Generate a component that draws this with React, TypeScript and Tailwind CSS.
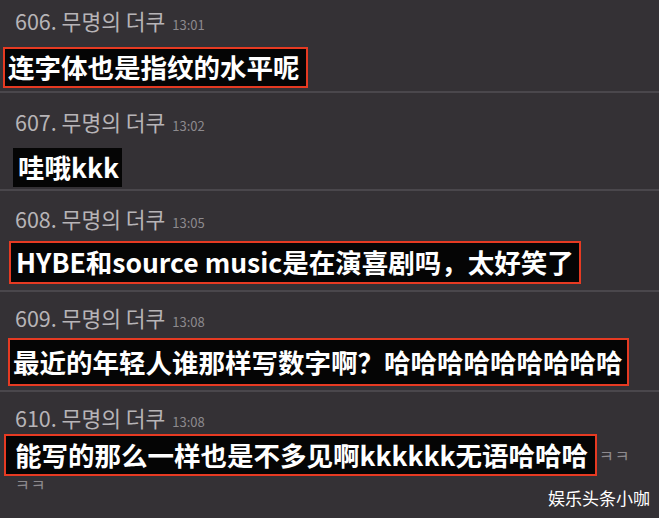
const rows = [
  {
    no: "606.",
    time: "13:01",
    text: "连字体也是指纹的水平呢",
    rowCls: "pt-[7px] pb-[3px]",
    boxCls: "mt-[12px] ml-[3px] h-[41px] border-2 border-[#e63a22] pl-[3px] pr-[6px]",
  },
  {
    no: "607.",
    time: "13:02",
    text: "哇哦kkk",
    rowCls: "pt-[15px] pb-[2px]",
    boxCls: "mt-[12px] ml-[13px] h-[39px] pl-[5px] pr-[3px]",
  },
  {
    no: "608.",
    time: "13:05",
    text: "HYBE和source music是在演喜剧吗，太好笑了",
    rowCls: "pt-[14px] pb-[6px]",
    boxCls: "mt-[8px] ml-[9px] h-[43px] border-2 border-[#e63a22] pl-[5px] pr-[5px]",
  },
  {
    no: "609.",
    time: "13:08",
    text: "最近的年轻人谁那样写数字啊？哈哈哈哈哈哈哈哈哈",
    rowCls: "pt-[12px] pb-[4px]",
    boxCls: "mt-[6px] ml-[8px] h-[48px] border-2 border-[#e63a22] pl-[3px] pr-[4px]",
  },
];

function Header({ no, time }: { no: string; time: string }) {
  return (
    <div className="flex h-[28px] items-baseline pl-[15px] leading-[28px]">
      <span className="text-[21.5px] text-[#b7b4b7]">{no} 무명의 더쿠</span>
      <span className="ml-[7px] text-[13px] text-[#8d8a8e]">{time}</span>
    </div>
  );
}

export default function App() {
  return (
    <div className="relative h-[518px] w-[659px] overflow-hidden bg-[#343135] font-['Noto_Sans_CJK_KR','Noto_Sans_CJK_SC',sans-serif]">
      {rows.map((r) => (
        <div key={r.no} className={`border-b-2 border-[#4a474c] ${r.rowCls}`}>
          <Header no={r.no} time={r.time} />
          <div className="flex">
            <div
              className={`flex items-center bg-[#050505] font-['Noto_Sans_CJK_SC',sans-serif] text-[26.5px] font-bold leading-none text-white ${r.boxCls}`}
            >
              {r.text}
            </div>
          </div>
        </div>
      ))}

      <div className="pt-[12px]">
        <Header no="610." time="13:08" />
        <div className="mt-[2px] flex items-center">
          <div className="ml-[4px] flex h-[42px] items-center border-2 border-[#e63a22] bg-[#050505] pl-[9px] pr-[7px] font-['Noto_Sans_CJK_SC',sans-serif] text-[26.5px] font-bold leading-none text-white">
            能写的那么一样也是不多见啊kkkkkk无语哈哈哈
          </div>
          <span className="ml-[2px] text-[16px] tracking-[1px] text-[#8d8a8e]">ㅋㅋ</span>
        </div>
        <div className="pl-[15px] text-[16px] leading-[16px] tracking-[1px] text-[#8d8a8e]">ㅋㅋ</div>
      </div>

      <div className="absolute left-[548px] top-[486px] font-['Noto_Sans_CJK_SC',sans-serif] text-[17px] leading-[24px] text-white">
        娱乐头条小咖
      </div>
    </div>
  );
}
